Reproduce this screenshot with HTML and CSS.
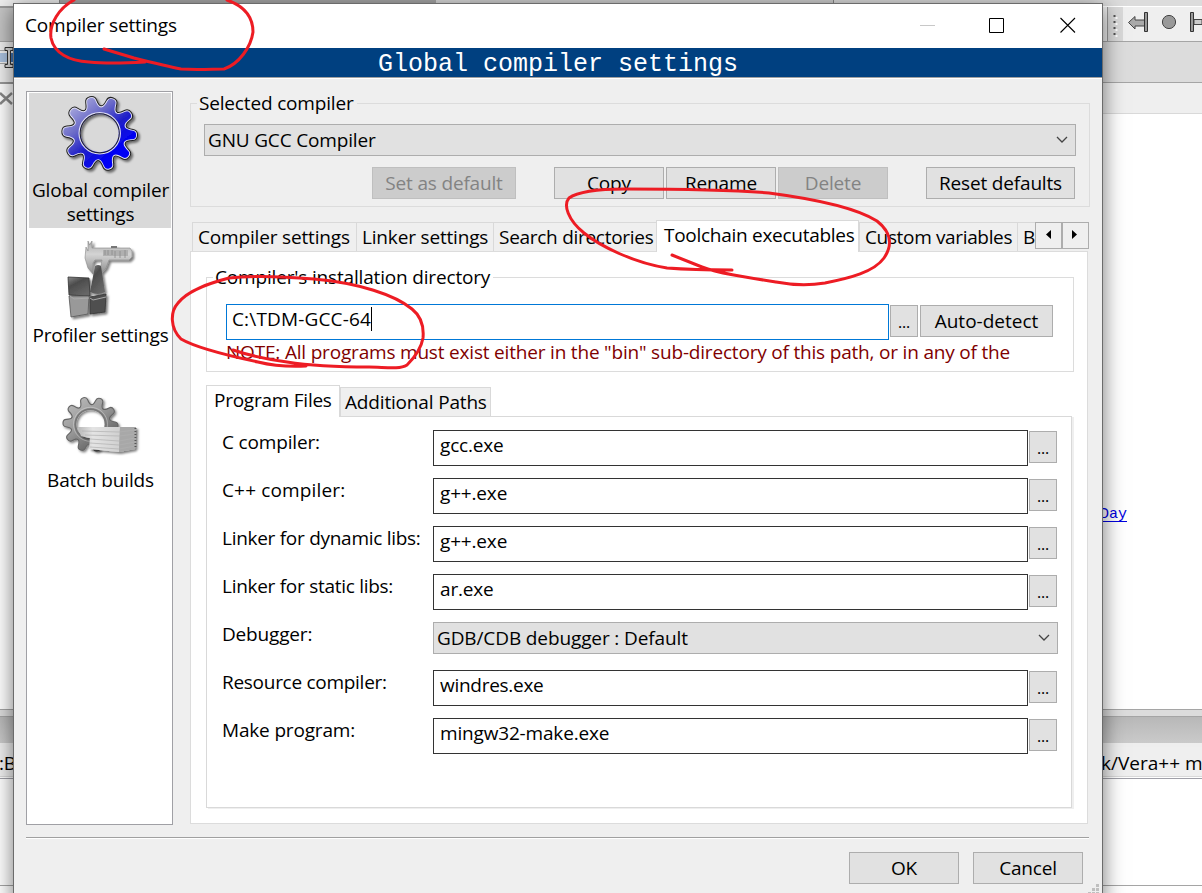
FILE: index.html
```
<!DOCTYPE html>
<html lang="en">
<head>
<meta charset="utf-8">
<title>Compiler settings</title>
<link rel="stylesheet" href="styles.css">
</head>
<body>
<div class="desktop">
  <div class="strip"><i class="s1"></i><i class="s2"></i><i class="s3"></i><i class="s4"></i></div>
  <div class="columns">
    <div class="back left">
      <div class="l-tool"></div>
      <div class="l-mark">
        <svg width="14" height="43" viewBox="0 0 14 43"><path d="M0 .5H14M0 9.5H14M0 22.5H14" stroke="#a5a5a5"/><path d="M0 12H14V21H0Z" fill="#a9c0de"/><path d="M11 12H14V21H11Z" fill="#4178b8"/><path d="M5 6.500H13V9.500H10.500V23.500H13V26.500H5V23.500H7.500V9.500H5Z" fill="#ddd" stroke="#333"/></svg>
      </div>
      <div class="l-close"><svg width="14" height="14" viewBox="0 0 14 14"><path d="M0 2L12 13M12 2L0 13" stroke="#888" stroke-width="2.400"/></svg></div>
      <div class="editor"></div>
      <div class="splitter"></div><div class="caption"></div>
      <div class="logtabs"><span class="log-l">:B</span></div>
      <div class="log"></div><div class="status"></div>
    </div>
    <div class="back right">
      <div class="r-tool">
        <svg width="99" height="35" viewBox="0 0 99 35"><path d="M5 0H20V34H5Z" fill="#d9d9d9"/><path d="M4.500 0V34" stroke="#999"/><path d="M11.500 8V30" stroke="#555" stroke-width="2" stroke-dasharray="2 4"/><path d="M13.500 10V32" stroke="#fff" stroke-width="2" stroke-dasharray="2 4"/><path d="M25.500 15.500L32 9.500V13H41.500V19H32V22Z" fill="#aaa" stroke="#444"/><path d="M41.500 5.500H44.500V24.500H41.500Z" fill="#999" stroke="#333"/><circle cx="66" cy="15" r="6.600" fill="#999" stroke="#444"/><path d="M87.500 5.500H90.500V24.500H87.500Z" fill="#999" stroke="#333"/><path d="M91 12.500H99V17.500H91Z" fill="#ccc" stroke="#444"/></svg>
      </div>
      <div class="r-gray"></div><div class="r-tabs"></div>
      <div class="editor r-editor"><a class="day">Day</a></div>
      <div class="splitter"></div><div class="caption"></div>
      <div class="logtabs"><span class="log-r">k/Vera++ m</span></div>
      <div class="log"></div><div class="status"></div>
    </div>
  </div>
</div>

<div class="dialog">
  <div class="titlebar">
    <span class="title">Compiler settings</span>
    <svg class="winbtns" width="160" height="44" viewBox="0 0 160 44"><path d="M0 21.500H15" stroke="#c8c8c8"/><path d="M69.500 14.500H83.500V28.500H69.500Z" fill="none" stroke="#000"/><path d="M140.500 14L155 28.500M155 14L140.500 28.500" stroke="#000" stroke-width="1.100"/></svg>
  </div>
  <div class="banner">Global compiler settings</div>
  <div class="main">
    <div class="sidebar">
      <div class="item selected">
        <svg width="142" height="85" viewBox="0 0 142 85">
          <defs>
            <path id="tooth" d="M0 0L-8 -24.600C-5.500 -25.500 -4.600 -29 -4.200 -33Q-3.800 -36.500 0 -36.500Q3.800 -36.500 4.200 -33C4.600 -29 5.500 -25.500 8 -24.600Z"/>
            <g id="gear"><use href="#tooth" transform="rotate(-15)"/><use href="#tooth" transform="rotate(21)"/><use href="#tooth" transform="rotate(57)"/><use href="#tooth" transform="rotate(93)"/><use href="#tooth" transform="rotate(129)"/><use href="#tooth" transform="rotate(165)"/><use href="#tooth" transform="rotate(201)"/><use href="#tooth" transform="rotate(237)"/><use href="#tooth" transform="rotate(273)"/><use href="#tooth" transform="rotate(309)"/></g>
            <clipPath id="gearclip"><use href="#tooth" transform="rotate(-15)"/><use href="#tooth" transform="rotate(21)"/><use href="#tooth" transform="rotate(57)"/><use href="#tooth" transform="rotate(93)"/><use href="#tooth" transform="rotate(129)"/><use href="#tooth" transform="rotate(165)"/><use href="#tooth" transform="rotate(201)"/><use href="#tooth" transform="rotate(237)"/><use href="#tooth" transform="rotate(273)"/><use href="#tooth" transform="rotate(309)"/></clipPath>
            <mask id="hole" maskUnits="userSpaceOnUse" x="-45" y="-45" width="90" height="90"><rect x="-45" y="-45" width="90" height="90" fill="#fff"/><circle r="19" fill="#000"/></mask>
            <linearGradient id="blue" x1="0" y1="0" x2=".8" y2="1"><stop offset=".1" stop-color="#b4b4e0"/><stop offset=".38" stop-color="#6a6ac8"/><stop offset=".58" stop-color="#2020c8"/><stop offset=".8" stop-color="#0000f4"/></linearGradient>
            <linearGradient id="gray" x1="0" y1="0" x2=".7" y2="1"><stop offset="0" stop-color="#c4c4c4"/><stop offset=".5" stop-color="#999"/><stop offset="1" stop-color="#555"/></linearGradient>
            <filter id="sh" x="-30%" y="-30%" width="160%" height="160%"><feDropShadow dx="2" dy="2" stdDeviation="1.300" flood-opacity=".5"/></filter>
          </defs>
          <g transform="translate(70.700 40.300)" filter="url(#sh)"><g mask="url(#hole)">
            <use href="#gear" fill="#222" stroke="#222" stroke-width="3.800"/>
            <use href="#gear" fill="#d8d8f4" stroke="#e4e4f8" stroke-width="1.800"/>
            <rect x="-38" y="-38" width="76" height="76" fill="url(#blue)" clip-path="url(#gearclip)"/>
            <circle r="20.500" fill="none" stroke="#dcdcf6" stroke-width="1.500"/><circle r="19.500" fill="none" stroke="#223" stroke-width="1.200"/></g></g>
        </svg>
        <span>Global compiler</span><span>settings</span>
      </div>
      <div class="item">
        <svg width="142" height="85" viewBox="0 0 142 85">
          <defs><linearGradient id="metal" x1="0" y1="0" x2="0" y2="1"><stop offset="0" stop-color="#aaa"/><stop offset=".4" stop-color="#d4d4d4"/><stop offset="1" stop-color="#8c8c8c"/></linearGradient><linearGradient id="dark" x1="0" y1="0" x2=".6" y2="1"><stop offset="0" stop-color="#888"/><stop offset=".4" stop-color="#4c4c4c"/><stop offset="1" stop-color="#666"/></linearGradient></defs>
          <g filter="url(#sh)">
            <path d="M57 9L59 13V3L60.500 7L63 3V10L101 10L103 13V19L100 22H80L77 30L72 36H70L72 27L73 22H66L64 25V36L59 30L56 20Z" fill="url(#metal)" stroke="#888" stroke-width=".6"/>
            <path d="M74 12H99V18H74Z" fill="#b0b0b0"/><path d="M76 12V17M79 12V17M83 12V17M86 13V20M91 13V20M96 12V20" stroke="#8a8a8a" stroke-width=".8"/><path d="M82 8H88V10H82Z" fill="#777"/>
            <path d="M66 28Q69 26 72 28L76 54Q69 58 61 54Z" fill="url(#dark)"/>
            <path d="M39 39L60 40L61 58L40 57Z" fill="url(#dark)" stroke="#333" stroke-width=".8"/>
            <path d="M40 58L60 58L59 76L42 79Z" fill="#999" stroke="#555" stroke-width=".8"/>
            <path d="M61 59L77 56L76 74L61 76Z" fill="#505050" stroke="#333" stroke-width=".8"/>
            <path d="M41 58L45 61L60 60M61 60L64 62L77 59" stroke="#aaa" fill="none"/>
          </g>
        </svg>
        <span>Profiler settings</span>
      </div>
      <div class="item">
        <svg width="142" height="85" viewBox="0 0 142 85">
          <defs><linearGradient id="paper" x1="0" x2="1"><stop offset="0" stop-color="#b8b8b8"/><stop offset=".35" stop-color="#e4e4e4"/><stop offset="1" stop-color="#d0d0d0"/></linearGradient></defs>
          <g transform="translate(61.500 41.300) scale(.74)" filter="url(#sh)"><g mask="url(#hole)">
            <use href="#gear" fill="#666" stroke="#666" stroke-width="3"/><rect x="-38" y="-38" width="76" height="76" fill="url(#gray)" clip-path="url(#gearclip)"/><circle r="20.500" fill="none" stroke="#777" stroke-width="2.500"/><circle r="23" fill="none" stroke="#ddd" stroke-width="1" opacity=".6"/></g></g>
          <g filter="url(#sh)"><path d="M49 44H91L90 69L60 66L61 55L52 53Z" fill="url(#paper)"/><path d="M91 44H107L106 66L90 69Z" fill="#a8a8a8"/><path d="M53 48L90 49L106 47M56 52L90 53L106 51M61 56L90 58L106 55M61 60L90 62L106 59M61 64L90 66L106 63" fill="none" stroke="#b0b0b0" stroke-width=".7"/><path d="M106.500 45V66" stroke="#555" stroke-width="2" stroke-dasharray="1 2"/></g>
        </svg>
        <span>Batch builds</span>
      </div>
    </div>
    <div class="content">
      <div class="group compiler">
        <span class="legend gray-bg">Selected compiler</span>
        <div class="combo"><span>GNU GCC Compiler</span><svg width="12" height="8" viewBox="0 0 12 8"><path d="M1 1L6 6L11 1" fill="none" stroke="#444" stroke-width="1.300"/></svg></div>
        <div class="actions">
          <div class="btn off w144">Set as default</div><div class="btn w110 ml38">Copy</div><div class="btn w110 ml2">Rename</div><div class="btn off w110 ml2">Delete</div><div class="btn w149 ml38">Reset defaults</div>
        </div>
      </div>
      <div class="tabs">
        <div class="tab t1">Compiler settings</div><div class="tab t2">Linker settings</div><div class="tab t3">Search directories</div><div class="tab t4 active">Toolchain executables</div><div class="tab t5">Custom variables</div><div class="tab t6">B</div>
        <div class="scroll"><svg width="27" height="27" viewBox="0 0 27 27"><path d="M16 8V17L11 12.500Z"/></svg></div><div class="scroll"><svg width="27" height="27" viewBox="0 0 27 27"><path d="M10 8V17L15 12.500Z"/></svg></div>
      </div>
      <div class="panel">
        <div class="group install">
          <span class="legend white-bg">Compiler's installation directory</span>
          <div class="row"><div class="field focus"><span class="path">C:\TDM-GCC-64</span><i class="caret"></i></div><div class="btn dots">...</div><div class="btn auto">Auto-detect</div></div>
          <div class="note">NOTE: All programs must exist either in the "bin" sub-directory of this path, or in any of the</div>
        </div>
        <div class="subtabs"><div class="tab active p1">Program Files</div><div class="tab p2">Additional Paths</div></div>
        <div class="programs">
          <div class="row"><label>C compiler:</label><div class="field">gcc.exe</div><div class="btn dots">...</div></div>
          <div class="row"><label class="wide">C++ compiler:</label><div class="field">g++.exe</div><div class="btn dots">...</div></div>
          <div class="row"><label class="tight">Linker for dynamic libs:</label><div class="field">g++.exe</div><div class="btn dots">...</div></div>
          <div class="row"><label class="tight">Linker for static libs:</label><div class="field">ar.exe</div><div class="btn dots">...</div></div>
          <div class="row"><label>Debugger:</label><div class="combo debugger"><span>GDB/CDB debugger : Default</span><svg width="12" height="8" viewBox="0 0 12 8"><path d="M1 1L6 6L11 1" fill="none" stroke="#444" stroke-width="1.300"/></svg></div></div>
          <div class="row"><label class="tight">Resource compiler:</label><div class="field tight">windres.exe</div><div class="btn dots">...</div></div>
          <div class="row"><label>Make program:</label><div class="field">mingw32-make.exe</div><div class="btn dots">...</div></div>
        </div>
      </div>
    </div>
  </div>
  <div class="footer"><div class="btn w110">OK</div><div class="btn w110">Cancel</div></div>
  <svg class="grip" width="12" height="12" viewBox="0 0 12 12"><path d="M8 0H11V3H8ZM4 4H7V7H4ZM8 4H11V7H8ZM0 8H3V11H0ZM4 8H7V11H4ZM8 8H11V11H8Z" fill="#bfbfbf"/></svg>
</div>

<svg class="ink" width="1202" height="893" viewBox="0 0 1202 893">
  <path d="M74 0C59 8 49 24 51 38C54 53 69 61 89 62C108 64 128 63 145 62M104 49L134 58C150 62 166 66 181 69C197 70 213 69 224 69C239 64 251 47 253 32C253 16 244 6 227 0"/>
  <path d="M732 270C702 270 680 269 667 268C634 263 600 246 584 233C568 220 563 205 569 198C580 190 606 189 625 189C690 189 735 190 769 193C807 198 855 207 877 221C891 232 893 245 884 258C874 272 850 278 825 283C806 286 792 285 776 282C744 277 718 273 702 267L672 255"/>
  <path d="M306 366C285 367 270 365 258 362C225 355 193 346 181 339C170 328 170 312 178 303C188 290 210 283 229 278C256 275 290 277 314 279C359 283 395 295 412 309C422 317 424 327 423 338C421 350 411 361 407 365C399 370 384 367 369 367C340 367 306 365 287 362C265 359 248 355 233 350"/>
</svg>
</body>
</html>
```
FILE: styles.css
```
* { box-sizing: border-box; }
body { margin: 0; width: 1202px; height: 893px; overflow: hidden; position: relative; font: 19px/24px "Open Sans", "Noto Sans", sans-serif; letter-spacing: -.17px; color: #000; background: #fff; white-space: nowrap; }
svg { display: block; flex: none; }
i { display: block; }
.desktop { height: 893px; display: flex; flex-direction: column; }
.strip { display: flex; height: 6px; background: #dcdcdc; }
.s1 { width: 60px; background: #eee; border-right: 1px solid #888; }
.s2 { width: 376px; background: #a8a8a8; }
.s3 { width: 34px; background: #dcdcdc; }
.s4 { width: 364px; background: #d0d0d0; border-right: 1px solid #888; }
.columns { flex: 1; display: flex; justify-content: space-between; }
.back { display: flex; flex-direction: column; overflow: hidden; }
.left { width: 14px; }
.right { width: 99px; }
.l-tool { height: 35px; background: #c4c4c4; border-top: 2px solid #999; }
.l-mark { height: 43px; background: #eee; border-bottom: 2px solid #999; }
.l-close { height: 30px; background: #fff; padding-top: 7px; }
.left .editor { height: 595px; background: #fff; }
.r-tool { height: 36px; background: #efefef; border-top: 1px solid #fff; border-bottom: 1px solid #a5a5a5; }
.r-gray { height: 41px; background: #dcdcdc; border-bottom: 1px solid #a5a5a5; }
.r-tabs { height: 31px; background: #efefef; border-bottom: 1px solid #d9d9d9; }
.r-editor { height: 595px; background: #fff; padding-top: 391px; }
.day { margin-left: -3px; display: block; color: #0000e0; text-decoration: underline; text-underline-offset: 3px; letter-spacing: 0; font: 15px/20px "Liberation Mono", monospace; }
.splitter { height: 8px; background: #dcdcdc; border-top: 1px solid #a5a5a5; border-bottom: 1px solid #a5a5a5; }
.caption { height: 26px; background: linear-gradient(#b8b8b8, #cacaca); }
.logtabs { height: 34px; border-top: 4px solid #eee; background: #efefef; border-bottom: 1px solid #d9d9d9; padding-top: 4px; }
.log-l { margin-left: -1px; }
.log-r { margin-left: -2px; letter-spacing: 0; }
.log { height: 108px; background: #fff; border-top: 1px solid #a0a0a8; border-bottom: 1px solid #a5a5a5; margin-top: 1px; }
.dialog { position: absolute; left: 13px; top: 3px; width: 1090px; height: 900px; background: #efefef; border: 1px solid #6b6b6b; box-shadow: 0 4px 20px rgba(0,0,0,.55); }
.titlebar { height: 44px; background: #fff; display: flex; justify-content: space-between; padding: 0 22px 0 11px; align-items: center; }
.title { margin-top: -2px; }
.banner { height: 31px; background: #004080; border-bottom: 1px solid #fff; box-shadow: inset 0 -1px #a0a0a0; color: #fff; text-align: center; letter-spacing: 0; font: 25px/34px "Liberation Mono", monospace; }
.main { display: flex; padding: 12px 0 0 12px; gap: 17px; }
.sidebar { width: 147px; height: 734px; background: #fff; border: 1px solid #a0a0a5; padding: 1px 1px 0 2px; }
.item { height: 135px; margin-bottom: 10px; display: flex; flex-direction: column; align-items: center; }
.item span { margin-left: 1px; }
.selected { background: #d9d9d9; }
.content { width: 900px; padding-top: 12px; }
.group { position: relative; border: 1px solid #dcdcdc; }
.legend { position: absolute; top: -13px; left: 6px; padding: 0 3px 0 2px; }
.gray-bg { background: #efefef; }
.white-bg { background: #fff; }
.compiler { height: 104px; padding: 20px 13px 0; }
.combo { height: 32px; background: #e1e1e1; border: 1px solid #adadad; display: flex; align-items: center; justify-content: space-between; padding: 0 7px 0 3px; }
.actions { display: flex; padding: 11px 0 0 168px; }
.btn { height: 32px; line-height: 31px; background: #e1e1e1; border: 1px solid #adadad; text-align: center; flex: none; }
.off { background: #ccc; border-color: #bfbfbf; color: #838383; }
.w110 { width: 110px; }
.w144 { width: 144px; }
.w149 { width: 149px; }
.ml38 { margin-left: 38px; }
.ml2 { margin-left: 2px; }
.tabs, .subtabs { display: flex; align-items: flex-end; height: 31px; }
.tabs { margin-top: 13px; padding-left: 2px; position: relative; }
.tab { height: 29px; line-height: 29px; border: 1px solid #d9d9d9; border-width: 1px 0 0 1px; padding-left: 5px; background: #efefef; flex: none; overflow: hidden; }
.tab.active { height: 32px; margin-bottom: -1px; background: #fff; line-height: 29px; position: relative; border-right-width: 1px; }
.t1 { width: 164px; }
.t2 { width: 137px; }
.t3 { width: 163px; letter-spacing: -.28px; }
.t4 { width: 203px; padding-left: 7px; letter-spacing: -.28px; }
.t5 { width: 158px; letter-spacing: -.35px; }
.t6 { width: 18px; }
.scroll { width: 27px; height: 27px; border: 1px solid #adadad; align-self: flex-start; margin-top: 2px; background: #efefef; }
.scroll svg { margin: -1px; }
.panel { width: 898px; height: 573px; background: #fff; border: 1px solid #dcdcdc; padding: 25px 13px 0 15px; }
.install { height: 95px; width: 868px; padding: 26px 0 0 19px; }
.row { display: flex; }
.field { height: 36px; border: 1px solid #333; background: #fff; padding-left: 6px; line-height: 29px; width: 595px; display: flex; margin-right: 1px; }
.focus { width: 663px; border-color: #0078d7; padding-left: 5px; }
.path { letter-spacing: .15px; }
.caret { width: 1px; height: 24px; background: #000; margin-top: 2px; }
.dots { width: 28px; margin-top: 1px; font-size: 16px; line-height: 33px; }
.auto { width: 133px; margin: 1px 0 0 2px; letter-spacing: 0; }
.note { color: #800000; letter-spacing: -.19px; }
.subtabs { margin-top: 13px; }
.p1 { width: 134px; padding-left: 7px; letter-spacing: -.25px; }
.p2 { width: 151px; border-right-width: 1px; padding-left: 4px; }
.programs { width: 866px; height: 392px; border: 1px solid #d9d9d9; box-shadow: 2px 1px #efefef; padding: 13px 0 0 15px; }
.programs .row { height: 48px; }
.programs label { width: 211px; flex: none; }
.wide { letter-spacing: .15px; }
.tight { letter-spacing: -.28px; }
.debugger { width: 625px; }
.debugger span { letter-spacing: -.12px; }
.footer { border-top: 1px solid #a0a0a0; box-shadow: inset 0 1px #fff; margin: 12px 13px 0 12px; padding: 14px 6px 0; display: flex; justify-content: flex-end; gap: 14px; }
.grip { position: absolute; left: 1074px; top: 880px; }
.ink { position: absolute; left: 0; top: 0; fill: none; stroke: #ed1c24; stroke-width: 3; stroke-linecap: round; stroke-linejoin: round; }
```
